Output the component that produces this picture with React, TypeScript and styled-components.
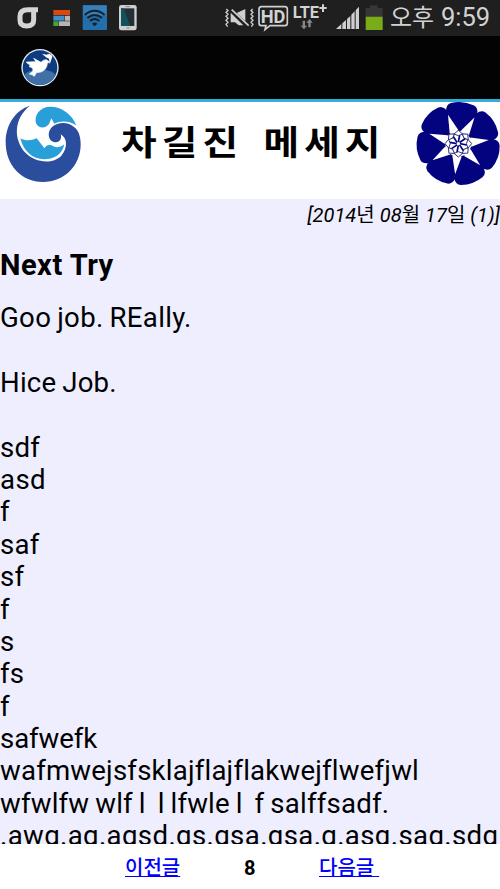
import { createGlobalStyle, styled } from 'styled-components';

const GlobalStyle = createGlobalStyle`
  body {
    margin: 0;
    background-color: white;
    color: black;
    font-family: Roboto, 'Noto Sans CJK KR', sans-serif;
  }
`;

const Wrapper = styled.div`
  display: flex;
  flex-direction: column;
  height: 889px;
  width: 500px;
  overflow: hidden;
`;

const StatusBar = styled.div`
  display: flex;
  justify-content: space-between;
  height: 36px;
  flex-shrink: 0;
  background-color: #1f1f1f;
`;
const StatusRight = styled.div`
  display: flex;
`;
const Clock = styled.span`
  width: 110px;
  box-sizing: border-box;
  color: #d2d2d2;
  font-size: 25.5px;
  line-height: 35px;
  white-space: nowrap;
`;
const Meridiem = styled.span`
  display: inline-block;
  width: 51px;
  font-size: 24px;
  letter-spacing: -0.2px;
`;

const ActionBar = styled.div`
  display: flex;
  align-items: center;
  height: 63px;
  flex-shrink: 0;
  padding-left: 20px;
  background-color: #030303;
  border-bottom: 3px solid #34abda;
`;

const Header = styled.header`
  display: flex;
  align-items: flex-start;
  justify-content: space-between;
  height: 97px;
  flex-shrink: 0;
  background-color: white;
`;
const Title = styled.h1`
  margin: 0;
  padding: 16px 0 0 5px;
  font-size: 34px;
  line-height: 50px;
  font-weight: 700;
  letter-spacing: 4.4px;
  word-spacing: 5px;
  white-space: nowrap;
  transform: scaleX(1.14);
`;

const Article = styled.main`
  flex: 1;
  overflow: hidden;
  background-color: #eeeeff;
`;
const PostDate = styled.div`
  height: 32px;
  font-size: 20px;
  line-height: 33px;
  font-style: italic;
  text-align: right;
  letter-spacing: 0.05px;
  white-space: nowrap;
`;
const Unit = styled.span`
  font-style: normal;
`;
const PostTitle = styled.h2`
  margin: 15px 0 18px;
  font-size: 29px;
  line-height: 38px;
  font-weight: 700;
  letter-spacing: 0.5px;
`;
const Line = styled.p<{ $spacing?: number }>`
  margin: 0;
  height: 32.4px;
  font-size: 27.6px;
  line-height: 32.4px;
  letter-spacing: ${(props) => props.$spacing ?? 0.2}px;
  word-spacing: -1.1px;
  white-space: pre;
`;

const Pager = styled.nav`
  display: grid;
  grid-template-columns: 125px 119px 75px 1fr;
  height: 45px;
  flex-shrink: 0;
  background-color: white;
  font-size: 20px;
  line-height: 48px;
  white-space: pre;
`;
const PageLink = styled.a`
  grid-column: ${(props) => (props.rel === 'prev' ? 2 : 4)};
  color: #0000ff;
  font-weight: 500;
  text-decoration: underline;
  text-decoration-thickness: 1px;
`;
const PageNumber = styled.b`
  grid-column: 3;
`;

const lines: { text: string; spacing?: number }[] = [
  { text: 'Goo job. REally.', spacing: 0.3 },
  { text: '' },
  { text: 'Hice Job.' },
  { text: '' },
  { text: 'sdf' },
  { text: 'asd', spacing: 0.4 },
  { text: 'f' },
  { text: 'saf' },
  { text: 'sf' },
  { text: 'f' },
  { text: 's' },
  { text: 'fs' },
  { text: 'f' },
  { text: 'safwefk', spacing: -0.1 },
  { text: 'wafmwejsfsklajflajflakwejflwefjwl' },
  { text: 'wfwlfw wlf l  l lfwle l  f salffsadf.' },
  { text: '.awg.ag.agsd.gs.gsa.gsa.g.asg.sag.sdg', spacing: 0.38 },
];

function NotificationIcons() {
  return (
    <svg width="150" height="36" viewBox="0 0 450 108">
      <path
        d="M114 29H84Q60 29 60 48V60Q60 78 80 78Q101 78 101 60V34"
        fill="none"
        stroke="#d4d4d4"
        strokeWidth="15"
      />
      <path d="M160 30h50v15h-50z" fill="#d9480f" />
      <path d="M160 47h32v15h-32z" fill="#3c8fc8" />
      <path d="M194 47h16v15h-16zM176 64h34v14h-34z" fill="#b5b5b5" />
      <path d="M160 64h14v14h-14z" fill="#42a735" />
      <rect x="248" y="15" width="73" height="75" rx="3" fill="#226fac" />
      <path d="M250 17h69v30h-69z" fill="#367fb8" />
      <g fill="none" stroke="#14212b" strokeWidth="6">
        <path d="M254 45Q284 20 314 45" />
        <path d="M262 54Q284 36 306 54" />
        <path d="M270 63Q284 51 298 63" />
      </g>
      <path d="M276 71Q284 64 292 71L284 79Z" fill="#14212b" />
      <rect x="357" y="15" width="53" height="76" rx="7" fill="#cfcfcf" />
      <path d="M363 25h40v53h-40z" fill="#263034" />
      <path d="M363 25h9l18 53h-27z" fill="#13525c" />
      <path d="M376 20h14M379 84h10" stroke="#888" strokeWidth="3" />
    </svg>
  );
}

function SystemIcons() {
  return (
    <svg width="167" height="36" viewBox="39 0 501 108">
      <g fill="none" stroke="#cfcfcf">
        <path
          d="M49 27l5 5-6 5 6 6-6 6 6 6-6 6 6 6-6 6 5 7M128 27l-5 5 6 5-6 6 6 6-6 6 6 6-6 6 6 6-5 7"
          strokeWidth="4"
        />
        <path d="M65 29L116 77" strokeWidth="5" />
        <path
          d="M154 20H225Q232 20 232 28V69Q232 77 225 77H180L165 89L168 77H154Q147 77 147 69V28Q147 20 154 20Z"
          strokeWidth="5"
        />
      </g>
      <path d="M62 38L100 76H86L75 67H62ZM80 39L106 27V64Z" fill="#cfcfcf" />
      <text
        x="152"
        y="68"
        fill="#d2d2d2"
        fontFamily="Roboto"
        fontSize="53"
        fontWeight="700"
        textLength="74"
        lengthAdjust="spacingAndGlyphs"
      >
        HD
      </text>
      <text
        x="248"
        y="55"
        fill="#d2d2d2"
        fontFamily="Roboto"
        fontSize="49"
        fontWeight="700"
        textLength="79"
        lengthAdjust="spacingAndGlyphs"
      >
        LTE
      </text>
      <path d="M339 13V36M328 24H350" stroke="#d2d2d2" strokeWidth="6" />
      <path
        d="M278 62h7v15h6l-9 11-10-11h6zM295 82h7V68h6l-9-11-10 11h6z"
        fill="#888"
      />
      <path
        d="M378 87L394 72V87ZM397 70L408 60V87H397ZM411 57L421 48V87H411ZM424 44L434 34V87H424ZM437 31L447 20V87H437Z"
        fill="#cfcfcf"
      />
      <path d="M480 16h23v8h15v26h-51V24h13z" fill="#363636" />
      <path d="M467 50h51v40h-51z" fill="#79ac18" />
    </svg>
  );
}

function DoveIcon() {
  return (
    <svg width="40" height="40" viewBox="60 146 120 120">
      <defs>
        <clipPath id="disc">
          <circle cx="120" cy="205" r="52" />
        </clipPath>
      </defs>
      <circle cx="120" cy="205" r="56" fill="#e6edf4" />
      <circle cx="120" cy="205" r="52" fill="#0d3b80" />
      <ellipse
        cx="120"
        cy="246"
        rx="57"
        ry="36"
        fill="#416fa8"
        clipPath="url(#disc)"
      />
      <path
        d="M79 188L108 187L101 177L123 189Q130 180 139 181L149 188L142 192Q141 211 123 218L109 220L103 231L96 226L88 224L99 215L98 207L87 201L91 198L80 190Z"
        fill="white"
        stroke="white"
        strokeWidth="2"
      />
      <path
        d="M126 163L139 166L149 163L157 170L155 178L149 195L147 178L138 174Z"
        fill="white"
      />
    </svg>
  );
}

function WaveLogo() {
  return (
    <svg width="100" height="97" viewBox="0 12 300 291">
      <path
        d="M90 23C47 36 17 80 17 132C17 203 65 252 129 252C194 252 242 202 242 139C242 116 236 98 223 88C205 70 174 71 156 87C141 101 144 125 159 131C177 137 187 124 182 109C205 122 201 155 184 173C157 201 104 193 78 166C37 123 43 59 90 23Z"
        fill="#2a4e9d"
      />
      <path
        d="M108 76C102 52 119 28 148 26C184 25 216 48 229 82C210 68 181 67 163 77L154 61L147 78C134 94 116 91 108 76Z"
        fill="#289fd8"
      />
      <path
        d="M61 121C78 131 96 127 110 121C119 134 126 140 133 151C138 142 146 139 155 142C163 149 179 151 193 139C187 168 164 184 132 184C98 184 70 159 61 121Z"
        fill="#289fd8"
      />
    </svg>
  );
}

const petals = [0, 1, 2, 3, 4, 5, 6];
const spokes = [0, 1, 2, 3, 4, 5, 6, 7];

function FlowerLogo() {
  return (
    <svg width="100" height="97" viewBox="0 21 300 291" overflow="visible">
      <g transform="translate(175 146)">
        {petals.map((petal) => (
          <path
            key={petal}
            d="M-47 -94Q-49 -113 -35 -119Q0 -132 35 -119Q49 -113 47 -94Q36 -66 14 -43Q0 -34 -14 -43Q-36 -66 -47 -94Z"
            transform={`rotate(${6 + (petal * 360) / 7})`}
            fill="#03037f"
          />
        ))}
        {/* white rays that run out between the petals */}
        {petals.map((petal) => (
          <path
            key={petal}
            d="M-14 -38L0 -92L14 -38Z"
            transform={`rotate(${6 + ((petal + 0.5) * 360) / 7})`}
            fill="white"
          />
        ))}
        {spokes.map((spoke) => (
          <g
            key={spoke}
            transform={`rotate(${spoke * 45})`}
            fill="none"
            stroke="#333376"
            strokeWidth="3"
          >
            <path d="M-13 -29L0 -40L13 -29M-13 -29L0 -24L13 -29" />
            <path d="M0 -5L4 -25" stroke="#03037f" strokeWidth="5" />
          </g>
        ))}
      </g>
    </svg>
  );
}

function App() {
  return (
    <Wrapper>
      <GlobalStyle />
      <StatusBar>
        <NotificationIcons />
        <StatusRight>
          <SystemIcons />
          <Clock>
            <Meridiem>오후</Meridiem>9:59
          </Clock>
        </StatusRight>
      </StatusBar>
      <ActionBar>
        <DoveIcon />
      </ActionBar>
      <Header>
        <WaveLogo />
        <Title>차길진 메세지</Title>
        <FlowerLogo />
      </Header>
      <Article>
        <PostDate>
          [2014<Unit>년</Unit> 08<Unit>월</Unit> 17<Unit>일</Unit> (1)]
        </PostDate>
        <PostTitle>Next Try</PostTitle>
        {lines.map((line, index) => (
          <Line key={index} $spacing={line.spacing}>
            {line.text}
          </Line>
        ))}
      </Article>
      <Pager>
        <PageLink href="#" rel="prev">
          이전글
        </PageLink>
        <PageNumber>8</PageNumber>
        <PageLink href="#" rel="next">
          {'다음글 '}
        </PageLink>
      </Pager>
    </Wrapper>
  );
}
export default App;
